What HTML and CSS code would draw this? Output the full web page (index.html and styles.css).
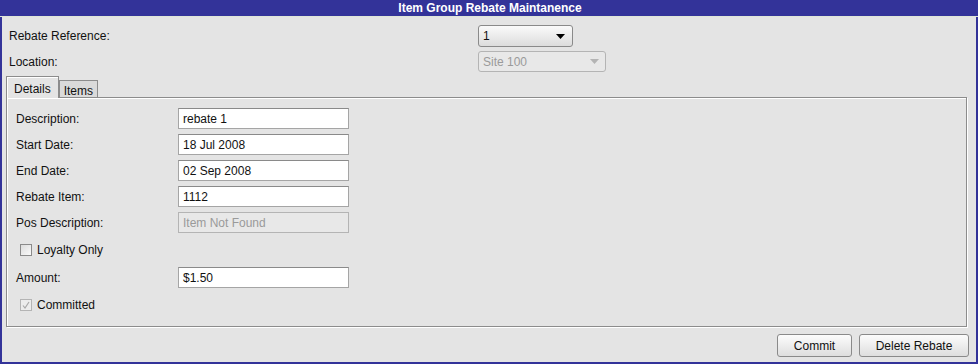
FILE: index.html
```html
<!DOCTYPE html>
<html>
<head>
    <meta charset="utf-8">
    <title>Item Group Rebate Maintanence</title>
    <link rel="stylesheet" href="styles.css">
</head>
<body>
    <div class="window">
        <div class="titlebar">Item Group Rebate Maintanence</div>

        <div class="top">
            <div class="top-row">
                <label>Rebate Reference:</label>
                <div class="combo">
                    <span>1</span>
                    <svg width="9" height="5" viewBox="0 0 9 5"><path d="M0 0h9L4.5 5z" fill="#000"/></svg>
                </div>
            </div>
            <div class="top-row">
                <label>Location:</label>
                <div class="combo disabled">
                    <span>Site 100</span>
                    <svg width="9" height="5" viewBox="0 0 9 5"><path d="M0 0h9L4.5 5z" fill="#b4b4b4"/></svg>
                </div>
            </div>
        </div>

        <div class="tabs">
            <div class="tab active">Details</div>
            <div class="tab">Items</div>
        </div>

        <div class="panel">
            <div class="field">
                <label>Description:</label>
                <div class="text">rebate 1</div>
            </div>
            <div class="field">
                <label>Start Date:</label>
                <div class="text">18 Jul 2008</div>
            </div>
            <div class="field">
                <label>End Date:</label>
                <div class="text">02 Sep 2008</div>
            </div>
            <div class="field">
                <label>Rebate Item:</label>
                <div class="text">1112</div>
            </div>
            <div class="field">
                <label>Pos Description:</label>
                <div class="text disabled">Item Not Found</div>
            </div>
            <div class="check">
                <span class="box"></span>
                <span>Loyalty Only</span>
            </div>
            <div class="field">
                <label>Amount:</label>
                <div class="text">$1.50</div>
            </div>
            <div class="check">
                <span class="box disabled">
                    <svg width="10" height="10" viewBox="0 0 10 10"><path d="M2 5.5l2 2.5 4-6" fill="none" stroke="#a8a8a8" stroke-width="1.2"/></svg>
                </span>
                <span>Committed</span>
            </div>
        </div>

        <div class="buttons">
            <button class="commit">Commit</button>
            <button class="delete">Delete Rebate</button>
        </div>
    </div>
</body>
</html>
```

FILE: styles.css
```css
* {
    box-sizing: border-box;
    margin: 0;
    padding: 0;
}
body {
    font-family: "Liberation Sans", Arial, sans-serif;
    font-size: 12px;
    color: #111;
    background: #fff;
}
.window {
    width: 978px;
    height: 364px;
    background: #e4e4e4;
    border: 2px solid #333399;
    border-top: none;
    display: flex;
    flex-direction: column;
}
.titlebar {
    height: 17px;
    background: #333399;
    color: #fff;
    font-weight: bold;
    font-size: 12px;
    line-height: 16px;
    text-align: center;
    border-bottom: 1px solid #dfe6d8;
    margin: 0 -2px;
    padding-left: 2px;
}
.top {
    padding: 8px 0 0 7px;
    display: flex;
    flex-direction: column;
    gap: 4px;
}
.top-row {
    display: flex;
    align-items: center;
    height: 22px;
}
.top-row label {
    width: 469px;
}
.combo {
    width: 95px;
    height: 22px;
    border: 1px solid #8a8a8a;
    border-radius: 3px;
    background: linear-gradient(#fafafa, #dcdcdc);
    display: flex;
    align-items: center;
    justify-content: space-between;
    padding: 0 7px 0 4px;
    font-size: 12px;
}
.combo.disabled {
    width: 128px;
    height: 21px;
    align-self: flex-start;
    background: #e8e8e8;
    border-color: #b4b4b4;
    color: #9a9a9a;
    padding-right: 6px;
}
.tabs {
    display: flex;
    align-items: flex-end;
    margin: 3px 0 0 4px;
    height: 21px;
}
.tab {
    height: 17px;
    padding: 3px 4px 0;
    border: 1px solid #8c8c8c;
    border-bottom: none;
    background: #dadada;
    position: relative;
}
.tab.active {
    height: 22px;
    padding: 5px 7px 0;
    background: #e4e4e4;
    border-color: #8c8c8c;
    box-shadow: inset 1px 1px 0 #fff;
    margin-bottom: -1px;
    z-index: 1;
}
.panel {
    margin: 0 9px 0 4px;
    height: 230px;
    border: 1px solid #8c8c8c;
    box-shadow: inset 1px 1px 0 #fff, 1px 1px 0 #fff;
    padding: 10px 0 0 9px;
    display: flex;
    flex-direction: column;
    gap: 5px;
}
.field {
    display: flex;
    align-items: center;
    height: 21px;
}
.field label {
    width: 162px;
}
.text {
    width: 171px;
    height: 21px;
    border: 1px solid #a5a5a5;
    border-top-color: #8a8a8a;
    background: #fff;
    padding: 3px 4px 0;
    line-height: 14px;
}
.text.disabled {
    background: #e8e8e8;
    color: #9a9a9a;
    border-color: #b4b4b4;
}
.check {
    display: flex;
    align-items: center;
    gap: 5px;
    height: 24px;
    padding-left: 4px;
}
.box {
    width: 12px;
    height: 12px;
    border: 1px solid #8a8a8a;
    background: linear-gradient(135deg, #dcdcdc, #fafafa);
    display: flex;
    align-items: center;
    justify-content: center;
}
.box.disabled {
    border-color: #b4b4b4;
    background: #ececec;
}
.buttons {
    display: flex;
    justify-content: flex-end;
    gap: 7px;
    margin: 7px 7px 0 0;
}
button {
    height: 23px;
    font-family: "Liberation Sans", Arial, sans-serif;
    font-size: 12px;
    color: #111;
    border: 1px solid #8a8a8a;
    border-radius: 3px;
    background: linear-gradient(#fcfcfc, #dedede);
}
.commit {
    width: 75px;
}
.delete {
    width: 110px;
}
```
